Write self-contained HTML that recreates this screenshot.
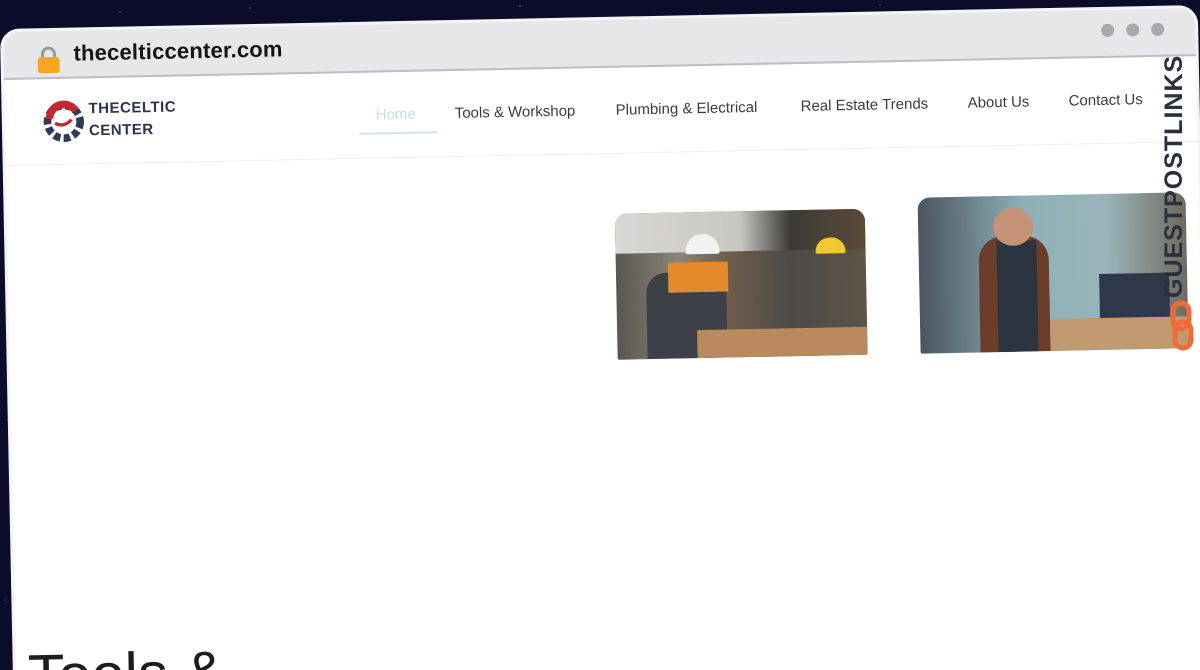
<!DOCTYPE html>
<html><head><meta charset="utf-8"><style>
html,body{margin:0;padding:0;width:1200px;height:670px;overflow:hidden;background:#0a0c2a;font-family:"Liberation Sans",sans-serif}
.root{position:relative;width:1200px;height:670px;overflow:hidden}
.stars{position:absolute;inset:0;background-image:radial-gradient(1px 1px at 120px 12px,#fff8,transparent),radial-gradient(1px 1px at 250px 8px,#fff9,transparent),radial-gradient(1px 1px at 340px 20px,#fff7,transparent),radial-gradient(1px 1px at 520px 6px,#fffa,transparent),radial-gradient(1px 1px at 700px 14px,#fff8,transparent),radial-gradient(1px 1px at 880px 5px,#fff9,transparent),radial-gradient(1px 1px at 5px 600px,#fff9,transparent),radial-gradient(1px 1px at 8px 420px,#fff7,transparent),radial-gradient(1px 1px at 1195px 500px,#fff7,transparent)}
.win{position:absolute;left:3px;top:32px;width:1192px;height:700px;background:#fff;border-radius:16px 16px 0 0;transform:rotate(-1.15deg);transform-origin:0 0;overflow:hidden;box-shadow:0 0 0 3px #f4f4f6}
.bar{position:absolute;left:0;top:0;right:0;height:46px;background:#e7e7e9;border-bottom:2px solid #bdbdc2}
.lock{position:absolute;left:33px;top:15px}
.url{position:absolute;left:70px;top:10px;font-size:22px;font-weight:bold;color:#141414;letter-spacing:.2px}
.dot{position:absolute;top:14px;width:13px;height:13px;border-radius:50%;background:#a9a9ad}
.nav{position:absolute;left:0;right:0;top:48px;height:85px;border-bottom:1px solid #eee}
.logo{position:absolute;left:36px;top:18px}
.lt{position:absolute;left:84px;top:20px;font-weight:bold;font-size:15px;line-height:22px;color:#2d3448;letter-spacing:.5px}
.ni{position:absolute;top:34px;font-size:15px;color:#3c3c3c}
.img{position:absolute;overflow:hidden;border-radius:12px 12px 2px 2px}
h1{position:absolute;left:12px;top:610px;margin:0;font-size:60px;font-weight:normal;color:#1d1d1d}
.bt{position:absolute;left:1160px;top:298px;transform:rotate(-90deg);transform-origin:0 0;font-weight:bold;font-size:25px;color:#2b2f3e;letter-spacing:1px;white-space:nowrap}
</style></head><body><div class="root">
<div class="stars"></div>
<div class="win">
 <div class="bar">
  <svg class="lock" width="24" height="28" viewBox="0 0 24 28"><path d="M6 12V8a6 6 0 0 1 12 0v4" fill="none" stroke="#9a9a9a" stroke-width="3"/><rect x="1" y="11" width="22" height="16" rx="3" fill="#f5a623"/></svg>
  <div class="url">thecelticcenter.com</div>
  <div class="dot" style="left:1098px"></div><div class="dot" style="left:1123px"></div><div class="dot" style="left:1148px"></div>
 </div>
 <div class="nav">
  <svg class="logo" width="46" height="48" viewBox="0 0 42 44">
   <circle cx="21" cy="23" r="15" fill="none" stroke="#2f3a55" stroke-width="7" stroke-dasharray="6 3"/>
   <path d="M8 20a13 13 0 0 1 24-7" fill="none" stroke="#c4282e" stroke-width="7"/>
   <circle cx="21" cy="23" r="8" fill="#fff"/>
   <path d="M13 24c5 3 11 2 15-3" fill="none" stroke="#c4282e" stroke-width="3"/>
  </svg>
  <div class="lt">THECELTIC<br>CENTER</div>
  <div class="ni" style="left:371px;color:#c9dde2">Home</div>
  <div style="position:absolute;left:354px;top:60px;width:78px;height:2px;background:#d3e4e8"></div>
  <div class="ni" style="left:450px">Tools &amp; Workshop</div>
  <div class="ni" style="left:611px">Plumbing &amp; Electrical</div>
  <div class="ni" style="left:796px">Real Estate Trends</div>
  <div class="ni" style="left:963px">About Us</div>
  <div class="ni" style="left:1064px">Contact Us</div>
 </div>
 <div class="img" style="left:608px;top:194px;width:250px;height:146px;background:linear-gradient(90deg,#5a5650 0%,#8a8478 25%,#6d5c4c 45%,#4e4a48 70%,#5d5548 100%)">
  <div style="position:absolute;left:0;top:0;right:0;height:40px;background:linear-gradient(90deg,#d8d8d6,#c8c6c0 50%,#3c3a36 70%,#5a4a38)"></div>
  <div style="position:absolute;left:30px;top:60px;width:80px;height:86px;background:#3e4048;border-radius:20px 20px 0 0"></div>
  <div style="position:absolute;left:52px;top:50px;width:60px;height:30px;background:#e38b2c"></div>
  <div style="position:absolute;left:70px;top:22px;width:34px;height:20px;border-radius:17px 17px 2px 2px;background:#f2f2f2"></div>
  <div style="position:absolute;left:200px;top:28px;width:30px;height:16px;border-radius:15px 15px 2px 2px;background:#f0c830"></div>
  <div style="position:absolute;left:80px;top:118px;width:170px;height:28px;background:#b88a5e"></div>
 </div>
 <div class="img" style="left:911px;top:184px;width:268px;height:156px;background:linear-gradient(90deg,#4a5560,#8fb0b8 40%,#9ab4ba 70%,#6f6a60)">
  <div style="position:absolute;left:60px;top:40px;width:70px;height:116px;background:#6b3e2c;border-radius:25px 25px 0 0"></div>
  <div style="position:absolute;left:78px;top:45px;width:40px;height:111px;background:#2c3440"></div>
  <div style="position:absolute;left:75px;top:12px;width:40px;height:38px;border-radius:50%;background:#c49274"></div>
  <div style="position:absolute;left:130px;top:124px;width:145px;height:32px;background:#c09a70"></div>
  <div style="position:absolute;left:180px;top:80px;width:70px;height:44px;background:#2e3848"></div>
 </div>
 <h1>Tools &amp;</h1>
</div>
<div class="bt">GUESTPOSTLINKS</div>
<svg style="position:absolute;left:1168px;top:300px" width="28" height="52" viewBox="0 0 28 52"><rect x="5" y="3" width="16" height="26" rx="8" fill="none" stroke="#f06a3a" stroke-width="5"/><rect x="7" y="22" width="16" height="26" rx="8" fill="none" stroke="#f06a3a" stroke-width="5"/></svg>
</div></body></html>
